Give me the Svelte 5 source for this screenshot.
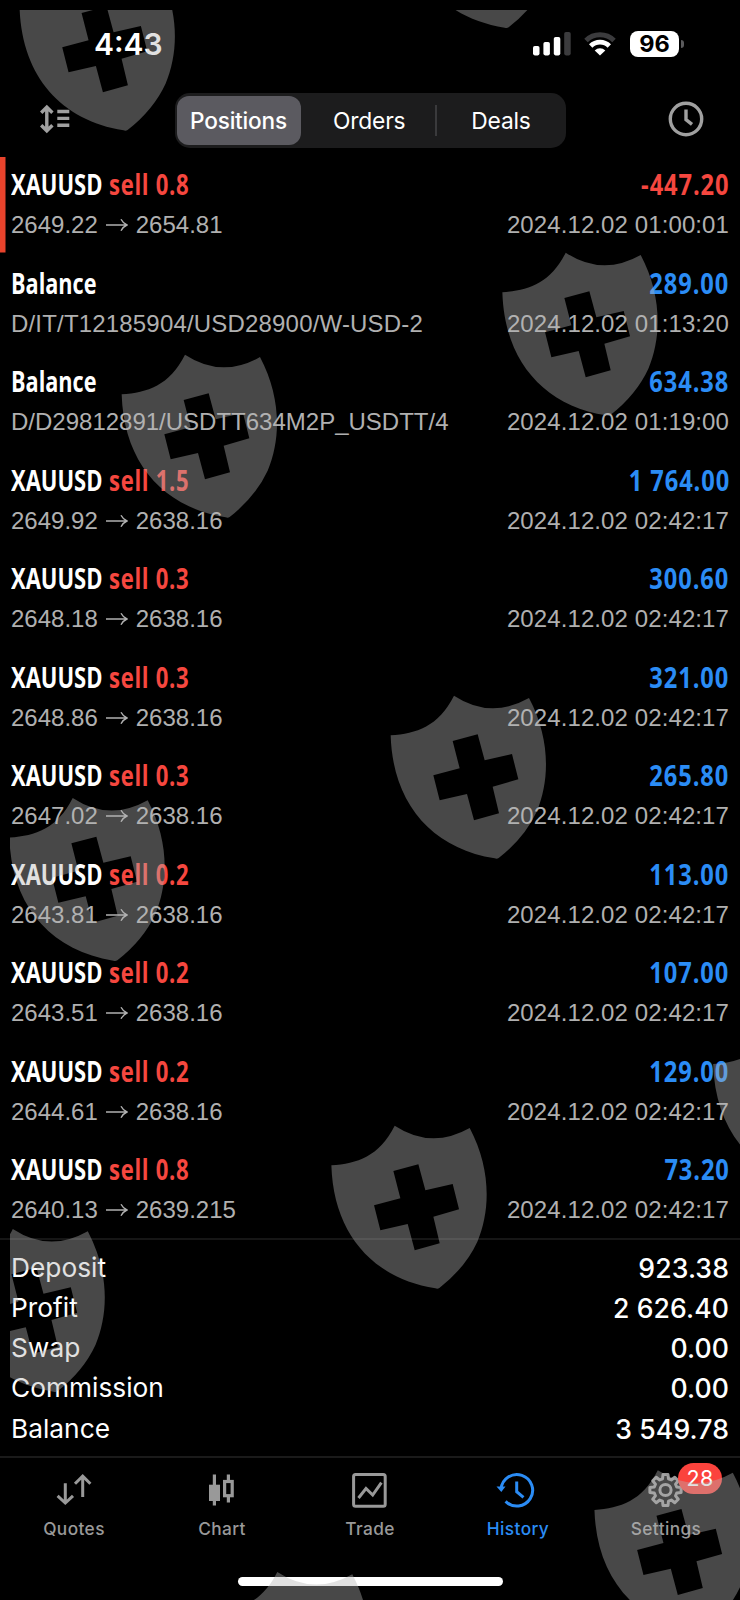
<script>
  const segments = ["Positions", "Orders", "Deals"];
  let segment = $state("Positions");
  let tab = $state("History");

  const history = [
    { side: "sell 0.8", from: "2649.22", to: "2654.81", profit: "-447.20", time: "01:00:01", marked: true },
    { note: "D/IT/T12185904/USD28900/W-USD-2", profit: "289.00", time: "01:13:20", wide: true },
    { note: "D/D29812891/USDTT634M2P_USDTT/4", profit: "634.38", time: "01:19:00" },
    { side: "sell 1.5", from: "2649.92", to: "2638.16", profit: "1 764.00", time: "02:42:17" },
    { side: "sell 0.3", from: "2648.18", to: "2638.16", profit: "300.60", time: "02:42:17" },
    { side: "sell 0.3", from: "2648.86", to: "2638.16", profit: "321.00", time: "02:42:17" },
    { side: "sell 0.3", from: "2647.02", to: "2638.16", profit: "265.80", time: "02:42:17" },
    { side: "sell 0.2", from: "2643.81", to: "2638.16", profit: "113.00", time: "02:42:17" },
    { side: "sell 0.2", from: "2643.51", to: "2638.16", profit: "107.00", time: "02:42:17" },
    { side: "sell 0.2", from: "2644.61", to: "2638.16", profit: "129.00", time: "02:42:17" },
    { side: "sell 0.8", from: "2640.13", to: "2639.215", profit: "73.20", time: "02:42:17" },
  ];

  const summary = [
    ["Deposit", "923.38"],
    ["Profit", "2 626.40"],
    ["Swap", "0.00"],
    ["Commission", "0.00"],
    ["Balance", "3 549.78"],
  ];

  const tabs = ["Quotes", "Chart", "Trade", "History", "Settings"];

  // top-left tip of every shield
  const shields = [
    [82.9, -32.3],
    [464, -135],
    [565.7, 252.7],
    [185, 354.7],
    [454, 695.7],
    [72.7, 798],
    [394.7, 1125.7],
    [12.8, 1229],
    [776.5, 1024.3],
    [657.8, 1470.3],
    [277.3, 1572],
  ];

  // eight-toothed cog around 19.5, 20
  const teeth = [];
  for (let i = 0; i < 8; i++) {
    for (const [deg, r] of [[-15, 11.6], [-9, 15.8], [9, 15.8], [15, 11.6]]) {
      const a = ((i * 45 + deg) * Math.PI) / 180;
      teeth.push(`${(19.5 + r * Math.sin(a)).toFixed(2)},${(20 - r * Math.cos(a)).toFixed(2)}`);
    }
  }
  const cog = teeth.join(" ");
</script>

<div class="screen">
  <div class="status">
    <span class="clock">4:43</span>
    <div class="indicators">
      <svg class="signal" viewBox="0 0 38 24" fill="#fff">
        <rect x="0" y="14" width="6.5" height="9.4" rx="1.8" />
        <rect x="10.4" y="10" width="6.5" height="13.4" rx="1.8" />
        <rect x="20.8" y="5" width="6.5" height="18.4" rx="1.8" />
        <rect x="31.2" y="0" width="6.5" height="23.4" rx="1.8" fill="#3b3b3d" />
      </svg>
      <svg class="wifi" viewBox="0 0 34 24">
        <path d="M3 8.5a20 20 0 0 1 28 0" fill="none" stroke="#3b3b3d" stroke-width="5" />
        <path d="M7.7 14a13.2 13.2 0 0 1 18.6 0" fill="none" stroke="#fff" stroke-width="4.8" />
        <path d="M17 23.6l-5.3-5.2a7.6 7.6 0 0 1 10.6 0z" fill="#fff" />
      </svg>
      <div class="battery"><span class="level">96</span><i></i></div>
    </div>
  </div>

  <header>
    <svg class="sort" viewBox="0 0 32 32" fill="none" stroke="#a0a0a0" stroke-width="3.4">
      <path d="M6.8 5v23M1.2 9.8l5.6-5.6 5.6 5.6M1.2 22.2l5.6 5.6 5.6-5.6" />
      <path d="M17.3 8.5h12M17.3 15.4h12M17.3 22.2h12" />
    </svg>
    <div class="segmented">
      {#each segments as name, i}
        {#if i === 2}<span class="split"></span>{/if}
        <button class:active={segment === name} onclick={() => (segment = name)}>{name}</button>
      {/each}
    </div>
    <svg class="period" viewBox="0 0 36 36" fill="none" stroke="#a0a0a0" stroke-width="3.4">
      <circle cx="18" cy="18" r="15.7" />
      <path d="M18 8.6v10l6 4.8" />
    </svg>
  </header>

  <div class="list">
    {#each history as row}
      <div class="row" class:marked={row.marked}>
        <div class="line title">
          {#if row.side}
            <span class="name"><b class="symbol">XAUUSD</b><b class="side">{row.side}</b></span>
          {:else}
            <b class="balance">Balance</b>
          {/if}
          <b class="profit" class:loss={row.profit.startsWith("-")}>{row.profit}</b>
        </div>
        <div class="line detail">
          {#if row.note}
            <span class:wide={row.wide}>{row.note}</span>
          {:else}
            <span class="prices">
              {row.from}
              <svg viewBox="0 0 22 16" fill="none" stroke="currentColor" stroke-width="1.4">
                <path d="M0 8h21M15 2.2q2.2 4.2 6 5.8q-3.8 1.6-6 5.8" />
              </svg>
              {row.to}
            </span>
          {/if}
          <span class="time">2024.12.02 {row.time}</span>
        </div>
      </div>
    {/each}
  </div>

  <div class="summary">
    {#each summary as [label, value]}
      <div class="total"><span>{label}</span><span class="value">{value}</span></div>
    {/each}
  </div>

  <nav>
    {#each tabs as name}
      <button class="tab" class:current={tab === name} onclick={() => (tab = name)}>
        <span class="glyph">
          <svg viewBox="0 0 40 40" fill="none" stroke="currentColor" stroke-width="3">
            {#if name === "Quotes"}
              <path d="M11.3 13.3v20M3.6 25.8l7.7 7.2 7.7-7.2" />
              <path d="M28.7 27V6M21 13.8l7.7-7.6 7.7 7.6" />
            {:else if name === "Chart"}
              <path d="M12.4 4.5v31M26.4 4.5v7M26.4 26v6.5" stroke-width="3.2" />
              <rect x="7" y="14.7" width="11" height="16.3" fill="currentColor" stroke="none" />
              <rect x="22.6" y="11.5" width="7.6" height="14.2" stroke-width="3.2" />
            {:else if name === "Trade"}
              <rect x="3.6" y="4.6" width="31.6" height="31.6" rx="2" />
              <path d="M8.5 28l7.5-9.5 6.7 6.5 8.7-12.3" />
            {:else if name === "History"}
              <path d="M3.1 18.8A15.8 15.8 0 1 1 7.6 31.4" />
              <path d="M-1.5 16.5h9l-4.2 5.5z" fill="currentColor" stroke="none" />
              <path d="M18.7 11.5v10.2l6.8 5.6" />
            {:else}
              <polygon points={cog} stroke-linejoin="round" />
              <circle cx="19.5" cy="20" r="5.6" />
            {/if}
          </svg>
          {#if name === "Settings"}<span class="badge">28</span>{/if}
        </span>
        {name}
      </button>
    {/each}
  </nav>
  <div class="home"></div>

  <div class="watermark">
    <svg viewBox="10 10 730 1590">
      {#each shields as [x, y]}
        <path
          transform="translate({x} {y}) scale(.33333) translate(-252 -47)"
          fill-rule="evenodd"
          d="M252 47Q362 119 477 54C541 175 540 300 500 395Q464 473 386 534Q381 537 374 535C185 505 68 370 62 166C140 160 205 140 252 47ZM248 183L323 163L344 241L426 222L445 298L368 320L387 400L312 421L291 342L209 361L190 286L269 265Z"
        />
      {/each}
    </svg>
  </div>
</div>

<style>
  :global(body) {
    background: #000;
  }

  .screen {
    position: relative;
    display: flex;
    flex-direction: column;
    width: 740px;
    height: 1600px;
    overflow: hidden;
    background: #000;
    color: #fff;
    font-family: Inter, "Liberation Sans", sans-serif;
  }

  button {
    padding: 0;
    border: none;
    background: none;
    color: inherit;
    font: inherit;
  }

  .status {
    display: flex;
    justify-content: space-between;
    align-items: center;
    height: 88px;
    padding: 0 56px 0 94px;
    flex-shrink: 0;
    box-sizing: border-box;
  }

  .clock {
    font-size: 30px;
    font-weight: 600;
  }

  .indicators {
    display: flex;
    align-items: center;
  }

  .signal {
    width: 38px;
    height: 24px;
    margin-right: 12px;
  }

  .wifi {
    width: 34px;
    height: 24px;
    margin-right: 13px;
  }

  .battery {
    display: flex;
    align-items: center;
    gap: 2px;
  }

  .level {
    width: 49px;
    height: 26px;
    border-radius: 8px;
    background: #fff;
    color: #000;
    font-size: 23.5px;
    font-weight: 700;
    line-height: 26px;
    text-align: center;
  }

  .battery i {
    width: 3px;
    height: 8px;
    border-radius: 0 3px 3px 0;
    background: #5a5a5c;
  }

  header {
    display: flex;
    justify-content: space-between;
    align-items: center;
    height: 66px;
    padding: 0 36px 4px 40px;
    box-sizing: border-box;
    flex-shrink: 0;
  }

  .sort {
    width: 32px;
    height: 32px;
  }

  .period {
    width: 36px;
    height: 36px;
  }

  .segmented {
    display: grid;
    grid-template-columns: 127px 131.5px 1.5px 1fr;
    align-items: center;
    width: 391px;
    height: 55px;
    margin-top: 3px;
    padding: 0 0 0 2px;
    box-sizing: border-box;
    border-radius: 15px;
    background: #1c1c1d;
  }

  .segmented button {
    height: 49px;
    border-radius: 12px;
    font-size: 22.8px;
    font-weight: 400;
    letter-spacing: -0.2px;
  }

  .segmented button.active {
    margin-right: 3px;
    background: #5b5a60;
    font-size: 22.6px;
    font-weight: 500;
  }

  .split {
    height: 31px;
    background: #3a3a3c;
  }

  .list {
    flex: 0 0 1085px;
    box-sizing: border-box;
    border-bottom: 2px solid #161616;
  }

  .row {
    height: 98.5px;
    padding: 11px 11px 0;
    box-sizing: border-box;
  }

  .marked {
    background: linear-gradient(#e8432c, #e8432c) 0 3px / 5.5px 95.5px no-repeat;
  }

  .line {
    display: flex;
    justify-content: space-between;
    white-space: nowrap;
  }

  .title {
    height: 40px;
    font-family: "Open Sans", sans-serif;
    font-size: 28.5px;
    line-height: 38px;
  }

  .title b {
    display: block;
    font-weight: 700;
    transform-origin: 0 0;
  }

  .name {
    display: flex;
  }

  .name .symbol {
    width: 98px;
    transform: scaleX(0.772);
  }

  .name .side {
    color: #f5473f;
    letter-spacing: 0.9px;
    transform: scaleX(0.775);
  }

  .title .balance {
    transform: scaleX(0.76);
  }

  .title .profit {
    margin-right: -0.7px;
    color: #2b8cf5;
    letter-spacing: 1.1px;
    transform: scaleX(0.83);
    transform-origin: 100% 0;
  }

  .title .profit.loss {
    color: #f5473f;
  }

  .detail {
    color: #b0b0b0;
    font-family: "Liberation Sans", sans-serif;
    font-size: 24px;
    line-height: 40px;
  }

  .prices {
    display: flex;
    align-items: center;
    gap: 8px;
  }

  .prices svg {
    width: 22px;
    height: 16px;
  }

  .wide {
    letter-spacing: 0.18px;
  }

  .time {
    letter-spacing: 0.1px;
  }

  .summary {
    display: flex;
    flex-direction: column;
    height: 218px;
    flex-shrink: 0;
    padding: 8px 11px 0;
    box-sizing: border-box;
    border-bottom: 2px solid #1a1a1a;
  }

  .total {
    display: flex;
    justify-content: space-between;
    height: 40.3px;
    font-size: 26.3px;
    line-height: 40px;
  }

  .value {
    font-size: 26.6px;
    font-weight: 450;
    letter-spacing: 0.1px;
  }

  nav {
    display: flex;
    padding-top: 12px;
    flex-shrink: 0;
  }

  .tab {
    display: flex;
    flex: 1;
    flex-direction: column;
    align-items: center;
    color: #999;
    font-size: 17.3px;
    font-weight: 500;
    line-height: 22px;
    letter-spacing: 0.4px;
  }

  .tab.current {
    color: #2b8cf5;
  }

  .glyph {
    position: relative;
    height: 40px;
    margin-bottom: 8px;
  }

  .glyph svg {
    display: block;
    width: 40px;
    height: 40px;
    overflow: visible;
  }

  .badge {
    position: absolute;
    top: -7px;
    left: 32px;
    width: 44px;
    height: 31px;
    border-radius: 16px;
    background: #fb433d;
    color: #fff;
    font-size: 21.5px;
    font-weight: 400;
    line-height: 30px;
    text-align: center;
  }

  .home {
    width: 265px;
    height: 9px;
    margin: auto auto 14px;
    border-radius: 5px;
    background: #fff;
  }

  .watermark {
    position: absolute;
    inset: 10px 0 0 10px;
    overflow: hidden;
    pointer-events: none;
  }

  .watermark svg {
    display: block;
    width: 730px;
    height: 1590px;
    fill: rgba(180, 180, 180, 0.4);
  }
</style>
